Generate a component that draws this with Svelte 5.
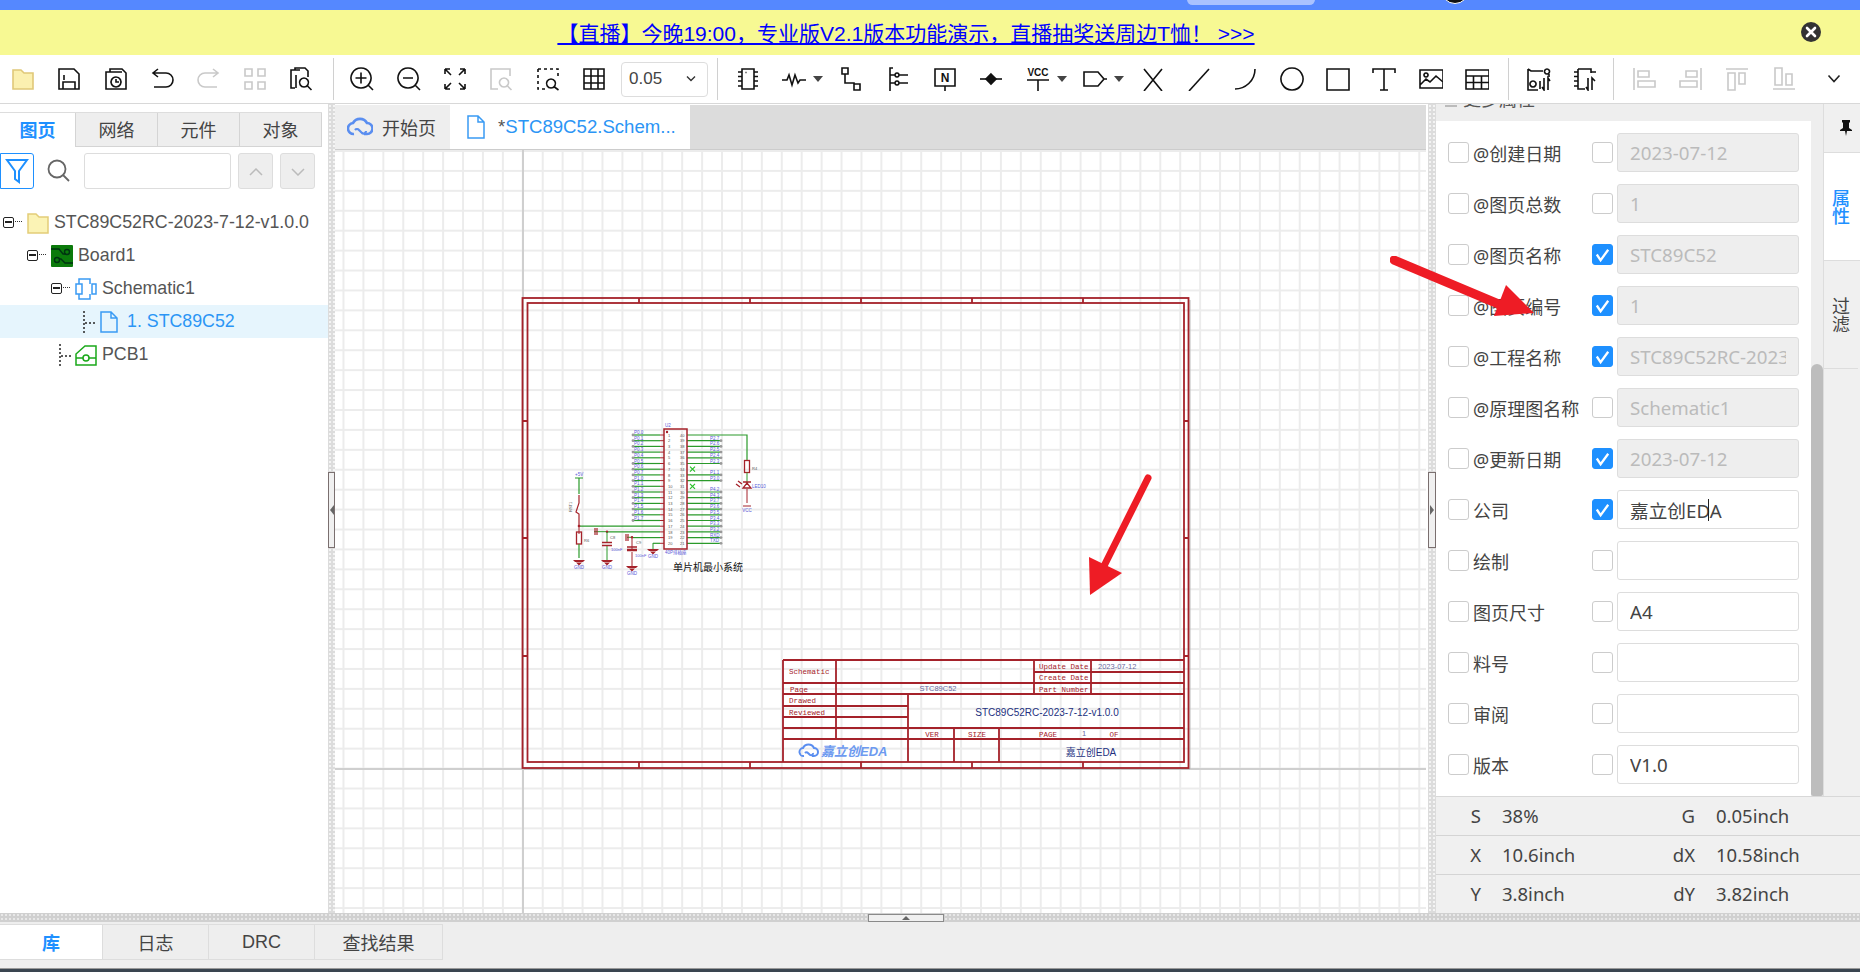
<script>
  const toolbar = [
    [
      { w: 46.5, f: 'M2 3h8l3 3h9v16H2z', fc: '#fbf0b0', sc: '#e0c878' },
      { d: 'M2 2h15l5 5v15H2z M7 8v5 M6 22v-7h12v7' },
      { d: 'M2 5h4V2h12l4 4v16H2z M6 5h12 M12 10a5 5 0 1 0 .01 0 M12 12v3h3' },
      { d: 'M8 2L3 6l5 4 M3 6h13a6.5 6.5 0 0 1 0 14H4' },
      { d: 'M16 2l5 4-5 4 M21 6H8a6.5 6.5 0 0 0 0 14h12', off: true },
      { d: 'M2 2h7v7H2z M15 2h7v7h-7z M2 15h7v7H2z M15 15h7v7h-7z', off: true },
      { d: 'M6 21H2V3h9 M6 3V1h10l3 3v6 M7 21V8 M15 11a4.5 4.5 0 1 0 .01 0 M18.5 19l4 4' },
    ],
    [
      { d: 'M11 1a10 10 0 1 0 .01 0 M18 18l5 5 M5.5 11h11 M11 5.5v11' },
      { d: 'M11 1a10 10 0 1 0 .01 0 M18 18l5 5 M6 11h10' },
      { d: 'M2 2l6 6 M2 2v5 M2 2h5 M22 2l-6 6 M22 2v5 M22 2h-5 M2 22l6-6 M2 22v-5 M2 22h5 M22 22l-6-6 M22 22v-5 M22 22h-5' },
      { d: 'M21 9V2H2v20h7 M15 11a4.5 4.5 0 1 0 .01 0 M18.5 19l4 4', off: true },
      { d: 'M2 2h20v9 M2 2v20h8', dash: true, d2: 'M15 12a4.5 4.5 0 1 0 .01 0 M18.5 20l4 3' },
      { d: 'M2 2h20v20H2z M2 9h20 M2 16h20 M9 2v20 M16 2v20' },
    ],
  ];
  const tools = [
    { d: 'M6 2h12v20H6z M2 5h4 M2 9.5h4 M2 14h4 M2 19h4 M18 5h4 M18 9.5h4 M18 14h4 M18 19h4 M9.5 5.5h1' },
    { d: 'M0 13h5l2-5 3 10 3-10 3 8 2-3h6', caret: true },
    { d: 'M2 1h6v6H2z M5 7v9h9v1 M14 17h6v6h-6z' },
    { d: 'M7 1H4v23 M4 8h5 M4 16h5 M13 8h9 M13 16h9 M11 6a2 2 0 1 0 .01 0 M11 14a2 2 0 1 0 .01 0' },
    { d: 'M2 2h20v17H2z M12 19v5', label: 'N', ly: 15, ls: 12 },
    { d: 'M1 12h22', f: 'M12 7l5 5-5 5-5-5z', fc: '#111', sc: '#111' },
    { d: 'M1 13h22 M12 13v11', label: 'VCC', ly: 9, ls: 10, caret: true },
    { d: 'M1 5h14l6 7-6 7H1z M21 12h3', caret: true },
    { d: 'M3 2l18 22 M21 2L3 24' },
    { d: 'M2 24L22 2' },
    { d: 'M2 22c10 0 20-8 20-20' },
    { d: 'M12 1a11 11 0 1 0 .01 0' },
    { d: 'M1 2h22v21H1z' },
    { d: 'M1 6V2h22v4 M12 2v21 M8 23h8' },
    { d: 'M1 3h23v18H1z M1 18l6-6 4 3 6-6 7 6 M7 6a2 2 0 1 0 .01 0' },
    { d: 'M1 3h23v19H1z M1 9h23 M1 15.5h23 M8.5 9v13 M16.5 9v13' },
  ];
  const convert = [
    { d: 'M1 2l3 2h12 M20 2a2.500 2.500 0 1 0 .01 0 M1 2v21h10 M22 7v3 M6 14a3 3 0 1 0 .01 0 M13 14v8 M17 11v12l-2-3 M21 23V11l2 3' },
    { d: 'M5 2h13v4 M5 2v20h7 M1 5h4 M1 9.5h4 M1 14h4 M1 19h4 M18 5h5 M15 11v12l-2-3 M19 23V11l3 3' },
  ];
  const aligns = [
    { d: 'M2 1v22 M6 4h11v6H6z M6 14h17v6H6z', off: true },
    { d: 'M22 1v22 M7 4h11v6H7z M1 14h17v6H1z', off: true },
    { d: 'M1 2h22 M3 6h7v17H3z M14 6h6v11h-6z', off: true },
    { d: 'M1 22h22 M3 1h7v17H3z M14 7h6v11h-6z', off: true },
  ];

  const tree = [
    { level: 0, label: 'STC89C52RC-2023-7-12-v1.0.0', kind: 'folder', open: true },
    { level: 1, label: 'Board1', kind: 'board', open: true },
    { level: 2, label: 'Schematic1', kind: 'sch', open: true },
    { level: 3, label: '1. STC89C52', kind: 'page', selected: true },
    { level: 2, label: 'PCB1', kind: 'pcb' },
  ];

  const attrs = [
    { name: '@创建日期', on: false, value: '2023-07-12', locked: true },
    { name: '@图页总数', on: false, value: '1', locked: true },
    { name: '@图页名称', on: true, value: 'STC89C52', locked: true },
    { name: '@图页编号', on: true, value: '1', locked: true },
    { name: '@工程名称', on: true, value: 'STC89C52RC-2023-7-12-v1.0.0', locked: true },
    { name: '@原理图名称', on: false, value: 'Schematic1', locked: true },
    { name: '@更新日期', on: true, value: '2023-07-12', locked: true },
    { name: '公司', on: true, value: '嘉立创EDA', caret: true },
    { name: '绘制', on: false, value: '' },
    { name: '图页尺寸', on: false, value: 'A4' },
    { name: '料号', on: false, value: '' },
    { name: '审阅', on: false, value: '' },
    { name: '版本', on: false, value: 'V1.0' },
  ];

  const stats = [
    ['S', '38%', 'G', '0.05inch'],
    ['X', '10.6inch', 'dX', '10.58inch'],
    ['Y', '3.8inch', 'dY', '3.82inch'],
  ];

  // schematic, in page coordinates
  const RED = '#a5222a';
  const GREEN = '#2a9a2a';
  const rowY = (i) => 435 + 5.7 * i;
  const leftNets = ['P0.0','P0.1','P0.2','P0.3','P0.4','P0.5','P0.6','P0.7','P1.0','P1.1','P1.2','P1.3','P1.4','P1.5','P1.6','P1.7'];
  const rightNets = { 1:'P2.7', 2:'P2.6', 3:'P2.5', 4:'P2.4', 5:'P2.3', 7:'P1.1', 8:'P3.0', 10:'P4.2', 11:'P4.3', 12:'P3.7', 13:'P3.6', 14:'P3.5', 15:'P3.4', 16:'P3.3', 17:'P3.2', 18:'RXD', 19:'TXD' };
  const pins = Array.from({ length: 20 }, (_, i) => i);
  const leftStart = (i) => (i < 16 ? 633 : i === 16 ? 579 : i === 17 ? 607 : i === 18 ? 633 : 653);
  const gnds = [[579, 560], [607, 560], [632, 566], [653, 549]];
  const ticksX = [639, 750, 861, 972, 1083];
  const ticksY = [421, 538, 656];
</script>

{#snippet icon(it)}
  <svg class="ico" class:off={it.off} viewBox="0 0 24 24" width="24" height="24">
    {#if it.f}<path d={it.f} fill={it.fc} stroke={it.sc} stroke-width="1.6" />{/if}
    {#if it.d}<path d={it.d} class:dash={it.dash} />{/if}
    {#if it.d2}<path d={it.d2} />{/if}
    {#if it.label}<text x="12" y={it.ly} font-size={it.ls} text-anchor="middle">{it.label}</text>{/if}
  </svg>
{/snippet}

{#snippet btn(it)}
  <button class="tool" class:wide={it.caret}>
    {@render icon(it)}
    {#if it.caret}<span class="tri"></span>{/if}
  </button>
{/snippet}

<div class="page">
  <div class="topbar">
    <span class="pill"></span>
    <span class="avatar"></span>
  </div>
  <div class="banner">
    <a href="#live">【直播】今晚19:00，专业版V2.1版本功能演示，直播抽奖送周边T恤！ &gt;&gt;&gt;</a>
    <span class="close">
      <svg viewBox="0 0 20 20" width="20" height="20"><circle cx="10" cy="10" r="10" fill="#333" /><path d="M6 6l8 8M14 6l-8 8" stroke="#fff" stroke-width="2.6" stroke-linecap="round" /></svg>
    </span>
  </div>

  <div class="toolbar">
    {#each toolbar[0] as it}{@render btn(it)}{/each}
    <i class="sep first"></i>
    {#each toolbar[1] as it}{@render btn(it)}{/each}
    <div class="gridsel"><span>0.05</span><svg viewBox="0 0 12 8" width="12" height="8"><path d="M2 1.5l4 4 4-4" fill="none" stroke="#333" stroke-width="1.4" /></svg></div>
    <i class="sep second"></i>
    {#each tools as it}{@render btn(it)}{/each}
    <i class="sep third"></i>
    {#each convert as it}{@render btn(it)}{/each}
    <i class="sep fourth"></i>
    {#each aligns as it}{@render btn(it)}{/each}
    <button class="tool more"><svg viewBox="0 0 14 10" width="14" height="10"><path d="M1.5 1.5L7 7.5l5.500-6" fill="none" stroke="#222" stroke-width="1.6" /></svg></button>
  </div>

  <div class="main">
    <aside class="left">
      <div class="ltabs">
        <span class="active">图页</span><span>网络</span><span>元件</span><span>对象</span>
      </div>
      <div class="filter">
        <button class="funnel">
          <svg viewBox="0 0 24 28" width="24" height="28"><path d="M2 3h20l-8 11v11l-4-3v-8z" fill="none" stroke="#1e90ff" stroke-width="2" /></svg>
        </button>
        <svg class="lens" viewBox="0 0 24 24" width="24" height="24"><circle cx="10" cy="10" r="8.500" fill="none" stroke="#666" stroke-width="1.800" /><path d="M16 16l6 6" stroke="#666" stroke-width="1.800" /></svg>
        <div class="search"></div>
        <button class="step"><svg viewBox="0 0 14 8" width="14" height="8"><path d="M1 7l6-6 6 6" fill="none" stroke="#bbb" stroke-width="1.500" /></svg></button>
        <button class="step"><svg viewBox="0 0 14 8" width="14" height="8"><path d="M1 1l6 6 6-6" fill="none" stroke="#bbb" stroke-width="1.500" /></svg></button>
      </div>
      <div class="tree">
        {#each tree as node}
          <div class="node" class:selected={node.selected} style="padding-left: {node.level * 24 + 2}px">
            {#if node.open}
              <span class="box"><b></b></span>
            {:else}
              <span class="branch"></span>
            {/if}
            {#if node.kind === 'folder'}
              <svg viewBox="0 0 22 22" width="22" height="22"><path d="M1 2h8l3 3h9v16H1z" fill="#fbf3b5" stroke="#e3cd78" stroke-width="1.500" /></svg>
            {:else if node.kind === 'board'}
              <svg viewBox="0 0 22 22" width="22" height="22"><rect width="22" height="22" fill="#0b7a0b" rx="1" /><path d="M0 4h8l4 5h3 M22 18h-8l-4-4H8" fill="none" stroke="#031" stroke-width="1.400" /><circle cx="16" cy="7" r="2.500" fill="none" stroke="#031" stroke-width="1.400" /><circle cx="6" cy="15" r="2.500" fill="none" stroke="#031" stroke-width="1.400" /></svg>
            {:else if node.kind === 'sch'}
              <svg viewBox="0 0 22 22" width="22" height="22"><path d="M4 6V1h11v5 M15 16v5H4v-5 M1 6h6v10H1z M17 6h4v10h-4z" fill="none" stroke="#3a9bf4" stroke-width="1.500" /></svg>
            {:else if node.kind === 'page'}
              <svg viewBox="0 0 20 22" width="20" height="22"><path d="M2 1h10l6 6v14H2z M12 1v6h6" fill="none" stroke="#3a9bf4" stroke-width="1.500" /></svg>
            {:else}
              <svg viewBox="0 0 22 22" width="22" height="22"><path d="M1 10l9-8h11v19H1z" fill="none" stroke="#1aa81a" stroke-width="1.500" /><circle cx="11" cy="14" r="3" fill="none" stroke="#1aa81a" stroke-width="1.500" /><path d="M1 14h7 M14 14h7" stroke="#1aa81a" stroke-width="1.500" /></svg>
            {/if}
            <span class="nlabel">{node.label}</span>
          </div>
        {/each}
      </div>
    </aside>

    <div class="vsplit">
      <span class="handle"><i class="arr-l"></i></span>
    </div>

    <section class="center">
      <div class="doctabs">
        <span class="dtab home">
          <svg viewBox="0 0 26 20" width="26" height="20"><path d="M7 17a5.500 5.500 0 0 1-1-11 8 8 0 0 1 14 0 5.500 5.500 0 0 1 0 11h-3" fill="none" stroke="#5a8ef0" stroke-width="2.600" /><path d="M8 13a2.500 2.500 0 0 1 4 0l3 3a2.500 2.500 0 0 0 4-2" fill="none" stroke="#5a8ef0" stroke-width="2.200" /></svg>
          开始页
        </span>
        <span class="dtab doc">
          <svg viewBox="0 0 20 24" width="20" height="24"><path d="M2 1h10l6 6v16H2z M12 1v6h6" fill="none" stroke="#3a9bf4" stroke-width="1.500" /></svg>
          <em>*</em>STC89C52.Schem...
        </span>
      </div>
      <div class="canvas">
        <svg class="sheet" viewBox="335 150 1091 763" width="1091" height="763" font-family="'Liberation Sans','Noto Sans CJK SC',sans-serif">
          <path d="M523 150V913 M335 769H1426" stroke="#cfcfcf" stroke-width="2" fill="none" />
          <path d="M1190 300V769H524" stroke="#bbb" stroke-width="1" fill="none" />

          <g fill="none" stroke={RED} stroke-width="1.800">
            <rect x="522.500" y="298" width="666" height="470" />
            <rect x="527.500" y="303" width="656.500" height="459" />
            {#each ticksX as x}
              <path d="M{x} 298v5 M{x} 762v6" />
            {/each}
            {#each ticksY as y}
              <path d="M522 {y}h5 M1184 {y}h5" />
            {/each}
            <path d="M783 660H1184 M783 660V762 M783 683H1184 M1034 672H1184 M783 694H1184 M783 706H908 M783 717H908 M783 728H1184 M783 739H1184 M836 660V739 M908 694V762 M954 728V762 M999 728V762 M1034 660V694 M1091 660V694" />
          </g>
          <g font-family="'Liberation Mono',monospace" font-size="7.500" fill={RED}>
            <text x="789" y="674">Schematic</text>
            <text x="790" y="692">Page</text>
            <text x="789" y="703">Drawed</text>
            <text x="789" y="715">Reviewed</text>
            <text x="1039" y="669">Update Date</text>
            <text x="1039" y="680">Create Date</text>
            <text x="1039" y="692">Part Number</text>
            <text x="932" y="737" text-anchor="middle">VER</text>
            <text x="977" y="737" text-anchor="middle">SIZE</text>
            <text x="1048" y="737" text-anchor="middle">PAGE</text>
            <text x="1114" y="737" text-anchor="middle">OF</text>
          </g>
          <g font-size="7.500" fill="#6a6aa0">
            <text x="938" y="691" text-anchor="middle">STC89C52</text>
            <text x="1098" y="669">2023-07-12</text>
            <text x="1084" y="736" text-anchor="middle">1</text>
          </g>
          <text x="1047" y="716" font-size="10" text-anchor="middle" fill="#223080">STC89C52RC-2023-7-12-v1.0.0</text>
          <text x="1091" y="756" font-size="10" text-anchor="middle" fill="#223080">嘉立创EDA</text>
          <path d="M804 756a4 4 0 0 1-1-8 6 6 0 0 1 11 0 4 4 0 0 1 0 8h-2 M805 753a2 2 0 0 1 3 0l2 2a2 2 0 0 0 3-2" fill="none" stroke="#5a8ef0" stroke-width="2" />
          <text x="821" y="756" font-size="13" font-weight="700" font-style="italic" fill="#6d9af0">嘉立创EDA</text>

          <!-- schematic -->
          {#each pins as i}
            <path d="M{leftStart(i)} {rowY(i)}H660" stroke={GREEN} stroke-width="1.200" />
            <path d="M660 {rowY(i)}H664" stroke={RED} stroke-width="1" />
            <text x="668" y={rowY(i) + 1.600} font-size="4" fill="#555">{i + 1}</text>
            <text x="680" y={rowY(i) + 1.600} font-size="4" fill="#555">{40 - i}</text>
            {#if i < 16}
              <circle cx="633" cy={rowY(i)} r="1.400" fill="#999" />
              <text x="634" y={rowY(i) - 1} font-size="4.500" fill="#5a5ad8">{leftNets[i]}</text>
            {/if}
            {#if i === 0}
              <path d="M687 {rowY(i)}H747V460" fill="none" stroke={GREEN} stroke-width="1.200" />
            {:else if i !== 6 && i !== 9}
              <path d="M687 {rowY(i)}H721" stroke={GREEN} stroke-width="1.200" />
              <circle cx="721" cy={rowY(i)} r="1.400" fill="#999" />
              <text x="710" y={rowY(i) - 1} font-size="4.500" fill="#5a5ad8">{rightNets[i]}</text>
            {:else}
              <path d="M690 {rowY(i) - 2.500}l5 5 M695 {rowY(i) - 2.500}l-5 5" stroke="#2bc02b" stroke-width="1.200" />
            {/if}
          {/each}
          <rect x="664" y="429" width="23" height="120" fill="none" stroke={RED} stroke-width="1.500" />
          <circle cx="667" cy="432" r="1.200" fill={RED} />
          <text x="665" y="427" font-size="4.500" fill="#5a5ad8">U2</text>
          <text x="665" y="554" font-size="4.500" fill="#5a5ad8">40P排插座</text>

          <!-- switch and reset parts -->
          <path d="M575 478h8 M579 478v16" stroke={GREEN} stroke-width="1.200" />
          <text x="575" y="476" font-size="4.500" fill="#5a5ad8">+5V</text>
          <path d="M579 495v8l-3 9 3 2v12" fill="none" stroke={RED} stroke-width="1.200" />
          <circle cx="579" cy="526" r="1.300" fill={RED} />
          <text x="572" y="512" font-size="4" fill="#555" transform="rotate(-90 572 512)">RST1</text>
          <path d="M579 526v8" stroke={RED} stroke-width="1" />
          <rect x="576.500" y="532" width="5" height="12" fill="none" stroke={RED} stroke-width="1.300" />
          <path d="M579 544v14" stroke={GREEN} stroke-width="1.200" />
          <text x="584" y="542" font-size="4" fill="#555">R6</text>
          <path d="M594 531.700h13" stroke={GREEN} stroke-width="1" />
          <path d="M595 528v7 M597 528v7" stroke={RED} stroke-width="1.200" />
          <circle cx="607" cy="531.700" r="1.200" fill={RED} />
          <path d="M607 532v10 M607 546v14" stroke={GREEN} stroke-width="1" />
          <path d="M602 542.500h10 M602 545.500h10" stroke={RED} stroke-width="1.500" />
          <text x="610" y="539" font-size="4" fill="#555">C8</text>
          <text x="611" y="551" font-size="4" fill="#5a5ad8">100nF</text>
          <path d="M627 537.300h6" stroke={GREEN} stroke-width="1" />
          <path d="M626 534v7 M628 534v7" stroke={RED} stroke-width="1.200" />
          <circle cx="632" cy="537.300" r="1.200" fill={RED} />
          <path d="M632 537v14 M632 552v14" stroke={RED} stroke-width="1" />
          <path d="M627 547h10" stroke={RED} stroke-width="1.500" />
          <path d="M627 550h10" stroke={RED} stroke-width="2.500" />
          <text x="636" y="544" font-size="4" fill="#555">C9</text>
          <text x="635" y="557" font-size="4" fill="#5a5ad8">100nF</text>
          {#each gnds as [x, y]}
            <path d="M{x - 6} {y}h12l-2 2h-8zM{x - 3} {y + 2.500}h6l-3 3z" fill={RED} />
            <text x={x} y={y + 9} font-size="4.500" text-anchor="middle" fill="#5a5ad8">GND</text>
          {/each}
          <path d="M653 543v6" stroke={GREEN} stroke-width="1" />

          <!-- LED branch -->
          <rect x="744.500" y="460.500" width="5" height="12" fill="none" stroke={RED} stroke-width="1.300" />
          <text x="752" y="470" font-size="4" fill="#555">R4</text>
          <path d="M747 472.500v12" stroke={GREEN} stroke-width="1" />
          <path d="M743 488h8l-4-5z M743 482h8" fill="none" stroke={RED} stroke-width="1.300" />
          <path d="M736 484l4 3 M738 481l4 3" stroke={RED} stroke-width="1.300" />
          <path d="M747 489v14 M743 506h8" stroke={RED} stroke-width="1" />
          <text x="752" y="488" font-size="4.500" fill="#5a5ad8">LED10</text>
          <text x="747" y="512" font-size="4.500" text-anchor="middle" fill="#5a5ad8">VCC</text>
          <text x="673" y="571" font-size="10" fill="#111">单片机最小系统</text>

          <!-- annotation arrow -->
          <path d="M1148 478L1101 572" stroke="#ee1c25" stroke-width="7" stroke-linecap="round" />
          <path d="M1090 595L1089 557L1122 573z" fill="#ee1c25" />
        </svg>
      </div>
    </section>

    <div class="vsplit right">
      <span class="handle"><i class="arr-r"></i></span>
    </div>

    <aside class="right-panel">
      <div class="props">
        <div class="propcol">
          <div class="more-head"><span class="dash-mark"></span><span class="mh">更多属性</span></div>
          <div class="propbody">
            <div class="rows">
              {#each attrs as a}
                <div class="row">
                  <span class="chk"></span>
                  <span class="name">{a.name}</span>
                  <span class="chk" class:on={a.on}>
                    {#if a.on}<svg viewBox="0 0 20 20" width="19" height="19"><path d="M4 10l4 6 8-11" fill="none" stroke="#fff" stroke-width="2.400" /></svg>{/if}
                  </span>
                  <div class="val" class:locked={a.locked}>
                    <span>{a.value}</span>
                    {#if a.caret}<i class="cursor"></i>{/if}
                  </div>
                </div>
              {/each}
            </div>
            <div class="scroll"><span></span></div>
          </div>
        </div>
        <div class="sidetabs">
          <div class="pin"><svg viewBox="0 0 14 18" width="14" height="18"><path d="M3 1h8v2l-1 1v5l3 2v1H8l-1 5-1-5H1v-1l3-2V4L3 3z" fill="#111" /></svg></div>
          <span class="stab active">属性</span>
          <span class="stab">过滤</span>
        </div>
      </div>
      <div class="stats">
        {#each stats as s}
          <div class="srow">
            <span class="k">{s[0]}</span><span class="v">{s[1]}</span>
            <span class="k two">{s[2]}</span><span class="v">{s[3]}</span>
          </div>
        {/each}
      </div>
    </aside>
    <svg class="arrow" viewBox="0 0 150 70" width="150" height="70">
      <path d="M4 4L118 52" stroke="#ee1c25" stroke-width="9" stroke-linecap="round" />
      <path d="M116 29L144 57L104 60z" fill="#ee1c25" />
    </svg>
  </div>

  <div class="hsplit"><span class="hhandle"><i></i></span></div>
  <div class="bottom">
    <span class="btab active">库</span><span class="btab">日志</span><span class="btab">DRC</span><span class="btab">查找结果</span>
  </div>
  <div class="foot"></div>
</div>

<style>
  :global(body) {
    margin: 0;
    overflow: hidden;
  }

  .page {
    position: relative;
    width: 1860px;
    height: 972px;
    display: flex;
    flex-direction: column;
    overflow: hidden;
    background: #fff;
    font-family: "Liberation Sans", "Noto Sans CJK SC", sans-serif;
    color: #444;
  }

  .topbar {
    position: relative;
    height: 10px;
    flex: none;
    background: #5588ff;
    overflow: hidden;
  }
  .pill {
    position: absolute;
    left: 1187px;
    top: -6px;
    width: 128px;
    height: 11px;
    border-radius: 6px;
    background: #a9c2ff;
  }
  .avatar {
    position: absolute;
    left: 1441px;
    top: -24px;
    width: 26px;
    height: 26px;
    border: 1px solid #fff;
    border-radius: 50%;
    background: #111;
  }

  .banner {
    position: relative;
    height: 45px;
    flex: none;
    box-sizing: border-box;
    display: flex;
    align-items: center;
    justify-content: center;
    padding: 0 48px 2px 0;
    background: #f7f993;
    font-size: 21px;
  }
  .banner a {
    color: #0000ff;
  }
  .close {
    position: absolute;
    left: 1801px;
    top: 12px;
    height: 20px;
  }

  .toolbar {
    height: 48px;
    flex: none;
    display: flex;
    align-items: center;
    border-bottom: 1px solid #d8d8d8;
  }
  .tool {
    width: 46.4px;
    height: 48px;
    flex: none;
    padding: 0 11px;
    border: 0;
    background: none;
    display: flex;
    align-items: center;
  }
  .tool.wide {
    width: 57.5px;
  }
  .tool.more {
    width: 46px;
    padding: 0 16px;
    margin-left: 4px;
  }
  .ico {
    flex: none;
    fill: none;
    stroke: #111;
    stroke-width: 1.6;
  }
  .ico.off {
    stroke: #c9c9c9;
  }
  .ico text {
    stroke: none;
    fill: #111;
    font-family: "Liberation Sans", sans-serif;
    font-weight: 700;
  }
  .dash {
    stroke-dasharray: 3 3;
  }
  .tri {
    margin-left: 7px;
    flex: none;
    border-left: 5px solid transparent;
    border-right: 5px solid transparent;
    border-top: 6px solid #444;
  }
  .sep {
    width: 1px;
    height: 42px;
    flex: none;
    background: #d0d0d0;
  }
  .sep.first {
    margin: 0 5.500px 0 8px;
  }
  .sep.second {
    margin: 0 7px 0 9px;
  }
  .sep.third {
    margin: 0 7px 0 7px;
  }
  .sep.fourth {
    margin: 0 7px 0 5px;
  }
  .gridsel {
    width: 87px;
    height: 35px;
    flex: none;
    box-sizing: border-box;
    margin-left: 3.500px;
    padding: 0 10px 0 7px;
    border: 1px solid #ddd;
    border-radius: 4px;
    display: flex;
    align-items: center;
    justify-content: space-between;
    font-size: 17px;
    color: #444;
  }

  .main {
    position: relative;
    height: 809px;
    flex: none;
    display: flex;
  }

  .left {
    width: 328px;
    flex: none;
    display: flex;
    flex-direction: column;
  }
  .ltabs {
    margin-top: 8px;
    width: 322px;
    height: 35px;
    flex: none;
    box-sizing: border-box;
    display: flex;
    background: #eee;
    border-bottom: 1px solid #d4d4d4;
    border-top: 1px solid #ddd;
  }
  .ltabs span {
    width: 82px;
    box-sizing: border-box;
    display: flex;
    align-items: center;
    justify-content: center;
    padding-bottom: 2px;
    border-right: 1px solid #d4d4d4;
    font-size: 18px;
  }
  .ltabs span:first-child {
    width: 76px;
  }
  .ltabs .active {
    margin-bottom: -1px;
    background: #fff;
    color: #1e90ff;
    font-weight: 700;
  }
  .filter {
    margin-top: 6px;
    display: flex;
    align-items: center;
  }
  .funnel {
    width: 34px;
    height: 36px;
    padding: 0;
    box-sizing: border-box;
    display: flex;
    align-items: center;
    justify-content: center;
    border: 1px solid #1e90ff;
    border-radius: 0 3px 3px 0;
    background: #fff;
  }
  .lens {
    margin: 0 13px 0 13px;
  }
  .search {
    width: 147px;
    height: 36px;
    box-sizing: border-box;
    border: 1px solid #ddd;
    border-radius: 3px;
  }
  .step {
    width: 35px;
    height: 36px;
    margin-left: 7px;
    padding: 0;
    border: 1px solid #ddd;
    border-radius: 3px;
    background: #eee;
  }
  .tree {
    margin-top: 17px;
  }
  .node {
    height: 33px;
    display: flex;
    align-items: center;
    font-size: 17.8px;
    color: #555;
  }
  .node.selected {
    background: #e6f5fd;
    color: #2b95f5;
  }
  .box {
    position: relative;
    width: 11px;
    height: 11px;
    margin: 0 13px 0 1px;
    flex: none;
    border: 1.5px solid #222;
    border-radius: 2px;
    box-sizing: border-box;
  }
  .box b {
    position: absolute;
    left: 1px;
    right: 1px;
    top: 3px;
    height: 2px;
    background: #222;
  }
  .box::after {
    content: "";
    position: absolute;
    left: 100%;
    top: 3px;
    width: 7px;
    border-top: 1px dotted #333;
    margin-left: 2px;
  }
  .box::before {
    content: "";
    position: absolute;
    left: 3px;
    top: -6px;
    height: 20px;
    border-left: 1px dotted #333;
    z-index: -1;
  }
  .branch {
    width: 13px;
    height: 22px;
    margin: 0 3px 0 9px;
    flex: none;
    border-left: 2px dotted #333;
    box-sizing: border-box;
    background: repeating-linear-gradient(90deg, #333 0 2px, transparent 2px 4px) left 11px / 100% 2px no-repeat;
    opacity: 0.8;
  }
  .nlabel {
    margin-left: 5px;
    white-space: nowrap;
  }
  .node.selected .nlabel {
    margin-left: 8px;
  }

  .vsplit {
    position: relative;
    width: 7px;
    flex: none;
    background: #dcdcdc radial-gradient(#f4f4f4 1px, transparent 1.200px) 0 0 / 4px 4px;
  }
  .vsplit.right {
    width: 8px;
    margin-left: 2px;
    border-left: 0;
  }
  .handle {
    position: absolute;
    left: 0;
    top: 368px;
    width: 100%;
    height: 76px;
    box-sizing: border-box;
    border: 1px solid #7a6f6f;
    background: #f0f0f0;
    display: flex;
    align-items: center;
    justify-content: center;
  }
  .arr-l {
    border-top: 5px solid transparent;
    border-bottom: 5px solid transparent;
    border-right: 4px solid #666;
  }
  .arr-r {
    border-top: 5px solid transparent;
    border-bottom: 5px solid transparent;
    border-left: 4px solid #666;
  }

  .center {
    width: 1091px;
    flex: none;
    display: flex;
    flex-direction: column;
  }
  .doctabs {
    margin-top: 1px;
    height: 44px;
    flex: none;
    display: flex;
    background: #dcdcdc;
    border-bottom: 1px solid #ccc;
  }
  .dtab {
    display: flex;
    align-items: center;
    box-sizing: border-box;
    font-size: 18px;
  }
  .home {
    width: 115px;
    padding-left: 12px;
    gap: 9px;
    background: #eee;
  }
  .doc {
    width: 240px;
    padding-left: 16px;
    background: #fff;
    color: #2b95f5;
    font-size: 18.600px;
  }
  .doc svg {
    margin-right: 12px;
  }
  .doc em {
    font-style: normal;
    color: #555;
  }
  .canvas {
    flex: 1;
    min-height: 0;
    overflow: hidden;
    background-color: #fff;
    background-image:
      linear-gradient(90deg, #ececec 2px, transparent 2px),
      linear-gradient(#ececec 2px, transparent 2px);
    background-size: 19.93px 19.93px;
    background-position: 7.500px 0px;
  }
  .sheet {
    display: block;
  }

  .right-panel {
    flex: 1;
    min-width: 0;
    display: flex;
    flex-direction: column;
    font-family: "Noto Sans", "Noto Sans CJK SC", sans-serif;
  }
  .props {
    flex: 1;
    min-height: 0;
    display: flex;
  }
  .propcol {
    width: 387px;
    flex: none;
    display: flex;
    flex-direction: column;
    background: #eee;
  }
  .more-head {
    height: 17px;
    flex: none;
    overflow: hidden;
    display: flex;
    background: #eee;
    width: 375px;
  }
  .dash-mark {
    width: 12px;
    height: 2px;
    margin: 1px 0 0 9px;
    background: #bbb;
  }
  .mh {
    margin: -20px 0 0 6px;
    font-size: 18px;
    line-height: 30px;
    color: #555;
  }
  .propbody {
    flex: 1;
    min-height: 0;
    display: flex;
  }
  .rows {
    width: 375px;
    box-sizing: border-box;
    padding: 6px 0 0 12px;
    background: #fff;
  }
  .row {
    height: 51px;
    display: flex;
    align-items: center;
  }
  .chk {
    width: 21px;
    height: 21px;
    flex: none;
    box-sizing: border-box;
    border: 1px solid #ccc;
    border-radius: 3px;
    background: #fff;
    display: flex;
    align-items: center;
    justify-content: center;
  }
  .chk.on {
    border-color: #1e90ff;
    background: #1e90ff;
  }
  .name {
    width: 119px;
    flex: none;
    margin-left: 4px;
    font-size: 18px;
    white-space: nowrap;
    color: #444;
  }
  .val {
    width: 182px;
    height: 39px;
    flex: none;
    box-sizing: border-box;
    margin-left: 4px;
    padding: 0 12px;
    border: 1px solid #ddd;
    border-radius: 3px;
    display: flex;
    align-items: center;
    overflow: hidden;
    font-size: 18.700px;
    white-space: nowrap;
    color: #444;
  }
  .val span {
    overflow: hidden;
  }
  .val.locked {
    background: #eee;
    color: #bbb;
  }
  .cursor {
    width: 1px;
    height: 22px;
    margin-left: -14px;
    background: #222;
    flex: none;
  }
  .scroll {
    width: 12px;
    flex: none;
    padding-top: 243px;
    box-sizing: border-box;
  }
  .scroll span {
    display: block;
    height: 100%;
    border-radius: 6px 6px 2px 2px;
    background: #bdbdbd;
  }
  .sidetabs {
    flex: 1;
    display: flex;
    flex-direction: column;
    background: #f0f0f0;
    border-left: 1px solid #ddd;
  }
  .pin {
    height: 49px;
    flex: none;
    display: flex;
    align-items: center;
    justify-content: center;
    padding-left: 7px;
    background: #f0f0f0;
    border-bottom: 1px solid #ddd;
    box-sizing: border-box;
  }
  .stab {
    height: 108px;
    box-sizing: border-box;
    display: flex;
    align-items: center;
    justify-content: center;
    writing-mode: vertical-rl;
    font-size: 18px;
    line-height: 20px;
    border-bottom: 1px solid #ddd;
    margin-right: 2px;
    padding-right: 2px;
  }
  .stab.active {
    background: #fff;
    color: #1e90ff;
    margin-right: 0;
    padding-right: 4px;
    font-weight: 500;
  }
  .stats {
    height: 117px;
    flex: none;
    background: #f0f0f0;
    border-top: 1px solid #d8d8d8;
    font-size: 18.500px;
    box-sizing: border-box;
  }
  .srow {
    height: 39px;
    display: flex;
    align-items: center;
    padding-bottom: 2px;
    border-bottom: 1px solid #d4d4d4;
    box-sizing: border-box;
  }
  .srow:last-child {
    border-bottom: 0;
  }
  .k {
    width: 45px;
    flex: none;
    text-align: right;
  }
  .k.two {
    width: 46px;
  }
  .v {
    width: 147px;
    flex: none;
    margin-left: 21px;
  }
  .arrow {
    position: absolute;
    left: 1390px;
    top: 152px;
    pointer-events: none;
  }

  .hsplit {
    position: relative;
    height: 9px;
    flex: none;
    background: #d0d0d0 radial-gradient(#e8e8e8 1px, transparent 1.200px) 0 0 / 4px 4px;
  }
  .hhandle {
    position: absolute;
    left: 868px;
    top: 1px;
    width: 76px;
    height: 8px;
    box-sizing: border-box;
    border: 1px solid #8a8a8a;
    background: #f0f0f0;
    display: flex;
    align-items: center;
    justify-content: center;
  }
  .hhandle i {
    border-left: 4px solid transparent;
    border-right: 4px solid transparent;
    border-bottom: 4px solid #666;
  }
  .bottom {
    flex: 1;
    min-height: 0;
    display: flex;
    align-items: flex-start;
    padding-top: 2px;
    background: #eee;
  }
  .btab {
    width: 106px;
    height: 36px;
    box-sizing: border-box;
    display: flex;
    align-items: center;
    justify-content: center;
    border-top: 1px solid #ddd;
    border-bottom: 1px solid #ddd;
    border-right: 1px solid #ddd;
    font-size: 18px;
    color: #444;
  }
  .btab:first-child {
    width: 103px;
  }
  .btab:last-child {
    width: 128px;
  }
  .btab.active {
    background: #fff;
    color: #1e90ff;
    font-weight: 700;
  }
  .foot {
    height: 4px;
    flex: none;
    background: #3a4550;
    border-top: 1px solid #999;
    box-sizing: border-box;
  }
</style>
